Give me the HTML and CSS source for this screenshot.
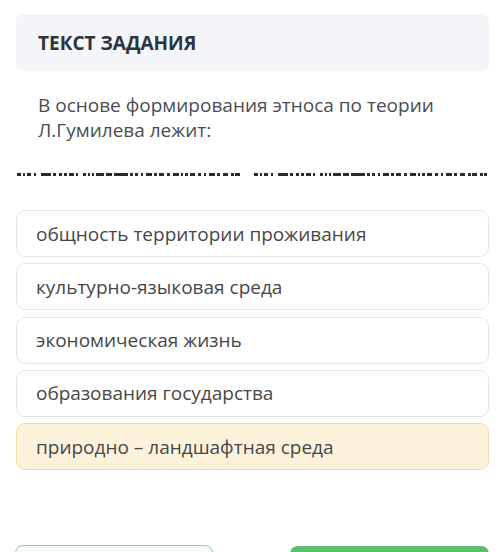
FILE: index.html
```html
<!DOCTYPE html>
<html lang="ru">
<head>
<meta charset="utf-8">
<link rel="stylesheet" href="styles.css">
</head>
<body>
<div class="page">
  <div class="task-head">ТЕКСТ ЗАДАНИЯ</div>
  <p class="question">В основе формирования этноса по теории Л.Гумилева лежит:</p>
  <svg class="dashes" width="472" height="3" viewBox="0 0 472 3">
    <defs>
      <g id="dash-run" fill="#2b2b2b">
        <rect x="0" y="0" width="4" height="3"/><rect x="6" y="0" width="2" height="3"/><rect x="10" y="0" width="4" height="3"/><rect x="17" y="0" width="2" height="3"/>
        <rect x="24" y="0" width="10" height="3"/><rect x="36" y="0" width="3" height="3"/><rect x="42" y="0" width="3" height="3"/><rect x="47" y="0" width="3" height="3"/>
        <rect x="52" y="0" width="5" height="3"/><rect x="59" y="0" width="2" height="3"/>
        <rect x="66" y="0" width="3" height="3"/><rect x="71" y="0" width="2" height="3"/><rect x="75" y="0" width="2" height="3"/><rect x="79" y="0" width="8" height="3"/>
        <rect x="89" y="0" width="6" height="3"/><rect x="97" y="0" width="14" height="3"/><rect x="113" y="0" width="3" height="3"/><rect x="118" y="0" width="3" height="3"/>
        <rect x="124" y="0" width="2" height="3"/><rect x="129" y="0" width="6" height="3"/><rect x="137" y="0" width="3" height="3"/><rect x="142" y="0" width="5" height="3"/>
        <rect x="150" y="0" width="3" height="3"/><rect x="156" y="0" width="6" height="3"/><rect x="164" y="0" width="2" height="3"/><rect x="168" y="0" width="3" height="3"/>
        <rect x="173" y="0" width="5" height="3"/><rect x="181" y="0" width="3" height="3"/><rect x="187" y="0" width="2" height="3"/><rect x="192" y="0" width="6" height="3"/>
        <rect x="200" y="0" width="3" height="3"/><rect x="206" y="0" width="5" height="3"/><rect x="214" y="0" width="3" height="3"/><rect x="218" y="0" width="5" height="3"/>
      </g>
    </defs>
    <use href="#dash-run" x="0"/>
    <use href="#dash-run" x="237"/>
    <rect x="463" y="0" width="3" height="3" fill="#2b2b2b"/><rect x="467" y="0" width="3" height="3" fill="#2b2b2b"/>
  </svg>
  <ul class="options">
    <li class="option">общность территории проживания</li>
    <li class="option">культурно-языковая среда</li>
    <li class="option">экономическая жизнь</li>
    <li class="option">образования государства</li>
    <li class="option option-selected">природно – ландшафтная среда</li>
  </ul>
  <div class="actions">
    <div class="btn btn-outline"></div>
    <div class="btn btn-primary"></div>
  </div>
</div>
</body>
</html>
```

FILE: styles.css
```css
html, body {
  margin: 0;
  padding: 0;
  background: #ffffff;
  height: 552px;
  overflow: hidden;
}
body {
  font-family: "Open Sans", "Noto Sans", sans-serif;
  color: #444a50;
}
.page {
  padding: 14px 11px 0 16px;
}
.task-head {
  height: 57px;
  box-sizing: border-box;
  background: #f3f5f8;
  border-radius: 7px;
  padding: 0 22px;
  display: flex;
  align-items: center;
  font-size: 19px;
  font-weight: 700;
  color: #2e343c;
}
.question {
  margin: 22px 0 0 22px;
  font-size: 19px;
  line-height: 25px;
  color: #4a4d52;
}
.dashes {
  display: block;
  margin: 30px 0 0 1px;
}
.options {
  list-style: none;
  margin: 34px 0 0 0;
  padding: 0;
  display: flex;
  flex-direction: column;
  gap: 6.25px;
}
.option {
  height: 47px;
  box-sizing: border-box;
  border: 1.5px solid #e6e6e6;
  border-radius: 9px;
  padding: 0 19px;
  display: flex;
  align-items: center;
  font-size: 19px;
  color: #474747;
  background: #fff;
}
.option-selected {
  background: #fcf2dc;
  border-color: #efdca5;
}
.actions {
  display: flex;
  justify-content: space-between;
  margin-top: 75px;
}
.btn {
  height: 40px;
  border-radius: 8px;
  box-sizing: border-box;
}
.btn-outline {
  width: 198px;
  margin-left: -1px;
  border: 1.5px solid #9fc0c2;
  background: #f7fdfd;
}
.btn-primary {
  width: 199px;
  background: #5cbd6a;
  margin-top: 1px;
}
```
